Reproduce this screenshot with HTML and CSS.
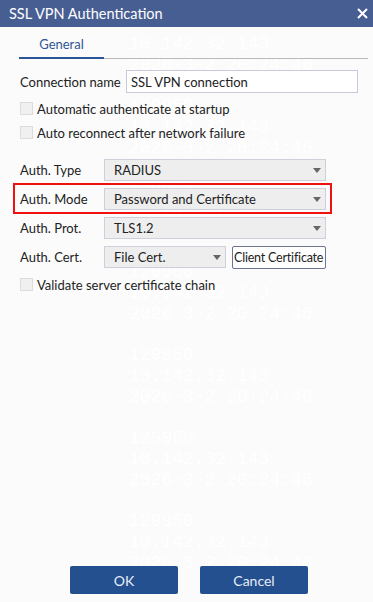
FILE: index.html
```html
<!DOCTYPE html>
<html lang="en">
<head>
    <meta charset="UTF-8">
    <meta name="viewport" content="width=device-width, initial-scale=1.0">
    <title>SSL VPN Authentication</title>
    <link rel="stylesheet" href="styles.css">
</head>
<body>
    <div class="dialog">
        <div class="watermark">
            <p>129950<br>10.142.32.143<br>2026-3-2 20:24:46</p>
            <p>129950<br>10.142.32.143<br>2026-3-2 20:24:46</p>
            <p>129950<br>10.142.32.143<br>2026-3-2 20:24:46</p>
            <p>129950<br>10.142.32.143<br>2026-3-2 20:24:46</p>
            <p>129950<br>10.142.32.143<br>2026-3-2 20:24:46</p>
            <p>129950<br>10.142.32.143<br>2026-3-2 20:24:46</p>
            <p>129950<br>10.142.32.143<br>2026-3-2 20:24:46</p>
        </div>

        <div class="titlebar">
            <span class="title">SSL VPN Authentication</span>
            <svg class="close" width="11" height="11" viewBox="0 0 11 11">
                <path d="M1 1 L10 10 M10 1 L1 10" stroke="#fff" stroke-width="2" fill="none"/>
            </svg>
        </div>

        <div class="tabs">
            <div class="tab active">General</div>
        </div>

        <div class="form">
            <div class="row name-row">
                <label class="label">Connection name</label>
                <div class="input">SSL VPN connection</div>
            </div>

            <div class="check first">
                <span class="box"></span>
                <span>Automatic authenticate at startup</span>
            </div>
            <div class="check">
                <span class="box"></span>
                <span>Auto reconnect after network failure</span>
            </div>

            <div class="fields">
                <div class="row">
                    <label class="label">Auth. Type</label>
                    <div class="select wide">
                        <span>RADIUS</span>
                        <svg width="8" height="5" viewBox="0 0 8 5"><path d="M0 0 H8 L4 5 Z" fill="#666"/></svg>
                    </div>
                </div>
                <div class="row highlight">
                    <label class="label">Auth. Mode</label>
                    <div class="select wide">
                        <span>Password and Certificate</span>
                        <svg width="8" height="5" viewBox="0 0 8 5"><path d="M0 0 H8 L4 5 Z" fill="#666"/></svg>
                    </div>
                </div>
                <div class="row">
                    <label class="label">Auth. Prot.</label>
                    <div class="select wide">
                        <span>TLS1.2</span>
                        <svg width="8" height="5" viewBox="0 0 8 5"><path d="M0 0 H8 L4 5 Z" fill="#666"/></svg>
                    </div>
                </div>
                <div class="row">
                    <label class="label">Auth. Cert.</label>
                    <div class="select short">
                        <span>File Cert.</span>
                        <svg width="8" height="5" viewBox="0 0 8 5"><path d="M0 0 H8 L4 5 Z" fill="#666"/></svg>
                    </div>
                    <button class="cert-btn">Client Certificate</button>
                </div>
            </div>

            <div class="check validate">
                <span class="box"></span>
                <span>Validate server certificate chain</span>
            </div>
        </div>

        <div class="actions">
            <button class="btn">OK</button>
            <button class="btn">Cancel</button>
        </div>
    </div>
</body>
</html>
```

FILE: styles.css
```css
* {
    margin: 0;
    padding: 0;
    box-sizing: border-box;
    font-family: Lato, 'Open Sans', sans-serif;
}

body {
    background: #fbfbfb;
    width: 373px;
    height: 602px;
    overflow: hidden;
}

.dialog {
    height: 602px;
    display: flex;
    flex-direction: column;
    color: #222;
    font-size: 13px;
}

/* faint user watermark behind the controls */
.watermark {
    position: absolute;
    z-index: -1;
    top: 13px;
    left: 129px;
    pointer-events: none;
}

.watermark p {
    color: #fff;
    font-family: 'Liberation Mono', monospace;
    font-size: 18px;
    line-height: 21px;
    margin-bottom: 20px;
}

.titlebar {
    height: 27px;
    background: #475e93;
    color: #fff;
    display: flex;
    align-items: center;
    justify-content: space-between;
    padding: 0 5px 0 9px;
}

.title {
    font-size: 14.5px;
}

.tabs {
    margin: 0 5px 0 19px;
    border-bottom: 1px solid #b9b9b9;
    display: flex;
}

.tab {
    width: 85px;
    height: 32px;
    padding-top: 9px;
    text-align: center;
    color: #2f5597;
    margin-bottom: -1px;
}

.tab.active {
    border-bottom: 2px solid #2a5599;
}

.form {
    padding: 11px 0 0 20px;
}

.row {
    display: flex;
    align-items: center;
    width: 306px;
    height: 22px;
}

.label {
    width: 84px;
}

.name-row {
    width: 338px;
    height: 23px;
}

.name-row .label {
    width: 106px;
}

.input {
    width: 232px;
    height: 23px;
    border: 1px solid #c9c8dc;
    background: #fff;
    padding: 0 4px;
    display: flex;
    align-items: center;
}

.check {
    display: flex;
    align-items: center;
    gap: 4px;
    height: 13px;
    margin-top: 11px;
}

.check.first {
    margin-top: 9px;
}

.box {
    width: 13px;
    height: 13px;
    background: #f0f0f0;
    border: 1px solid #dcdcdc;
}

.fields {
    display: flex;
    flex-direction: column;
    gap: 7px;
    margin-top: 20px;
}

.select {
    height: 22px;
    background: #eeeeee;
    border: 1px solid #cfcfdc;
    display: flex;
    align-items: center;
    justify-content: space-between;
    padding: 0 4px 0 9px;
}

.select.wide {
    width: 222px;
}

.select.short {
    width: 122px;
}

.highlight {
    position: relative;
}

.highlight::after {
    content: '';
    position: absolute;
    top: -5px;
    bottom: -4px;
    left: -7px;
    right: -6px;
    border: 2px solid #f01010;
}

.row .cert-btn {
    margin-left: 6px;
    width: 94px;
    height: 23px;
    background: #fff;
    border: 1px solid #6d7391;
    border-radius: 2px;
    font-size: 12.5px;
    color: #222;
    white-space: nowrap;
    overflow: hidden;
    padding: 0 1px;
    letter-spacing: -0.2px;
    text-align: left;
}

.validate {
    margin-top: 10px;
}

.actions {
    margin-top: auto;
    display: flex;
    gap: 22px;
    padding: 0 0 8px 70px;
}

.btn {
    width: 108px;
    height: 28px;
    background: #24508f;
    color: #e8eef8;
    border: none;
    border-radius: 2px;
    font-size: 14px;
}
```
